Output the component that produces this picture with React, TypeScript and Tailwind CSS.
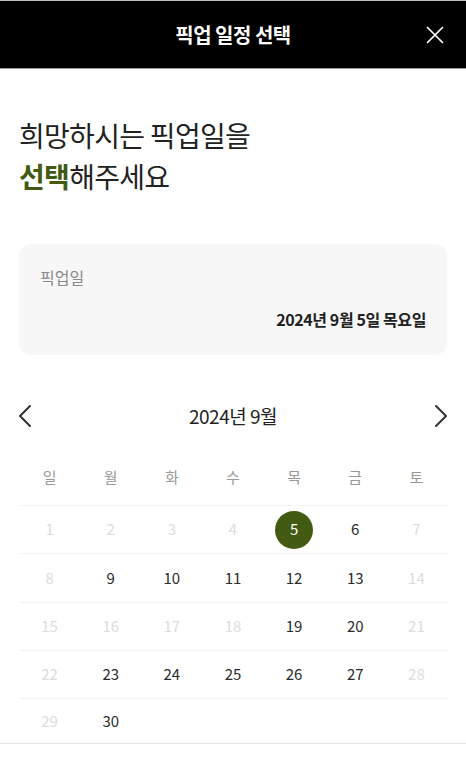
import { X } from "lucide-react";

const green = "#435a12";

const weekdays = ["일", "월", "화", "수", "목", "금", "토"];

// null = empty cell, otherwise day number
const weeks: (number | null)[][] = [
  [1, 2, 3, 4, 5, 6, 7],
  [8, 9, 10, 11, 12, 13, 14],
  [15, 16, 17, 18, 19, 20, 21],
  [22, 23, 24, 25, 26, 27, 28],
  [29, 30, null, null, null, null, null],
];

const available = [5, 6, 9, 10, 11, 12, 13, 19, 20, 23, 24, 25, 26, 27, 30];
const selected = 5;

const Chevron = ({ dir }: { dir: "left" | "right" }) => (
  <svg width="14" height="24" viewBox="0 0 14 24" fill="none">
    <path
      d={dir === "left" ? "M12 2 L2 12 L12 22" : "M2 2 L12 12 L2 22"}
      stroke="#333"
      strokeWidth="2"
      strokeLinecap="round"
      strokeLinejoin="round"
    />
  </svg>
);

const App = () => {
  return (
    <div
      className="w-[466px] h-[758px] bg-white overflow-hidden flex flex-col border-t border-[#bdbdbd]"
      style={{ fontFamily: '"Noto Sans CJK KR", "Noto Sans", sans-serif' }}
    >
      {/* header */}
      <div className="relative h-[68px] bg-black flex items-center justify-center border-b border-[#9a9a9a] shrink-0">
        <h1 className="text-white text-[20px] font-bold tracking-tight">
          픽업 일정 선택
        </h1>
        <button className="absolute right-[16px] top-1/2 -translate-y-1/2 text-white">
          <X size={30} strokeWidth={1.4} />
        </button>
      </div>

      <div className="px-[19px]">
        <h2 className="mt-[46px] text-[28px] leading-[41px] text-[#222] tracking-tight">
          희망하시는 픽업일을
          <br />
          <span className="font-bold" style={{ color: green }}>
            선택
          </span>
          해주세요
        </h2>

        {/* pickup date card */}
        <div className="mt-[47px] h-[111px] rounded-[12px] bg-[#f7f7f7] px-[21px] pt-[22px]">
          <p className="text-[16px] text-[#8a8a8a] leading-[22px]">픽업일</p>
          <p className="mt-[20px] text-right text-[16px] font-bold text-[#222] leading-[22px] tracking-tight">
            2024년 9월 5일 목요일
          </p>
        </div>

        {/* month nav */}
        <div className="mt-[46px] flex items-center justify-between h-[30px]">
          <button className="-ml-[1px]">
            <Chevron dir="left" />
          </button>
          <span className="text-[19px] text-[#222] tracking-tight">2024년 9월</span>
          <button className="-mr-[1px]">
            <Chevron dir="right" />
          </button>
        </div>

        {/* weekdays */}
        <div className="mt-[19px] grid grid-cols-7 h-[56px] items-center border-b border-[#f2f2f2]">
          {weekdays.map((d) => (
            <span key={d} className="text-center text-[15px] text-[#999]">
              {d}
            </span>
          ))}
        </div>

        {/* days */}
        {weeks.map((week, wi) => (
          <div
            key={wi}
            className={
              wi === weeks.length - 1
                ? "grid grid-cols-7 h-[44px] items-center"
                : "grid grid-cols-7 h-[48.25px] items-center border-b border-[#f2f2f2]"
            }
          >
            {week.map((day, di) => {
              if (day === null) return <span key={di} />;
              if (day === selected) {
                return (
                  <div key={di} className="flex justify-center">
                    <span
                      className="w-[38px] h-[38px] rounded-full flex items-center justify-center text-white text-[15px]"
                      style={{ backgroundColor: green }}
                    >
                      {day}
                    </span>
                  </div>
                );
              }
              return (
                <span
                  key={di}
                  className={
                    available.includes(day)
                      ? "text-center text-[15px] text-[#2a2a2a]"
                      : "text-center text-[15px] text-[#dcdcdc]"
                  }
                >
                  {day}
                </span>
              );
            })}
          </div>
        ))}
      </div>

      <div className="border-t border-[#e5e5e5]" />
    </div>
  );
};

export default App;
